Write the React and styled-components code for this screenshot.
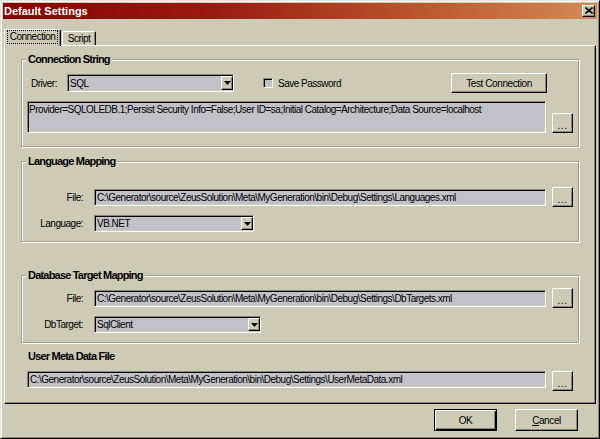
import React from 'react';
import styled, { createGlobalStyle } from 'styled-components';

const FACE = '#cdcab5';
const SHADOW = '#8a8774';
const FIELD = '#c2c1c8';
const FONT = `"Liberation Sans", Arial, sans-serif`;

const Global = createGlobalStyle`
  html, body { margin: 0; padding: 0; background: ${FACE}; }
  body { font-family: ${FONT}; font-size: 10px; letter-spacing: -0.5px; color: #000; }
  * { box-sizing: border-box; }
`;

const Window = styled.div`
  width: 600px;
  height: 439px;
  background: ${FACE};
  border: 1px solid;
  border-color: #e6e4d6 #000 #000 #e6e4d6;
  box-shadow: inset 1px 1px 0 #fff, inset -1px -1px 0 ${SHADOW};
  padding: 2px;
  display: flex;
  flex-direction: column;
`;

const TitleBar = styled.div`
  height: 16px;
  background: linear-gradient(to right, #850202 0%, #9a1a10 35%, #b9562f 70%, #d38b56 100%);
  display: flex;
  align-items: center;
  justify-content: space-between;
  padding: 0 2px 0 1px;
`;

const TitleText = styled.span`
  font-weight: bold;
  font-size: 11px;
  letter-spacing: 0;
  color: #fff;
`;

const CloseBtn = styled.div`
  width: 13px;
  height: 12px;
  background: ${FACE};
  border: 1px solid;
  border-color: #fff #000 #000 #fff;
  box-shadow: inset -1px -1px 0 ${SHADOW};
  display: flex;
  align-items: center;
  justify-content: center;
  margin-top: -1px;
`;

const TabStrip = styled.div`
  display: flex;
  align-items: flex-end;
  height: 16px;
  margin-top: 10px;
  padding-left: 1px;
  position: relative;
  z-index: 1;
`;

const Tab = styled.div`
  width: ${p => p.w}px;
  height: ${p => (p.active ? 17 : 14)}px;
  margin-bottom: ${p => (p.active ? -1 : 0)}px;
  margin-left: ${p => p.ml || 0}px;
  background: ${FACE};
  border: 1px solid;
  border-bottom: none;
  border-color: #fff #000 transparent #fff;
  border-radius: 2px 2px 0 0;
  box-shadow: inset -1px 0 0 ${SHADOW};
  display: flex;
  align-items: center;
  justify-content: center;
  padding-bottom: ${p => (p.active ? 2 : 0)}px;
`;

const Focus = styled.span`
  outline: 1px dotted #000;
  outline-offset: 0;
  padding: 0 2px;
  line-height: 12px;
`;

const Panel = styled.div`
  height: 359px;
  margin: 0 1px;
  border: 1px solid;
  border-color: #fff #000 #000 #fff;
  box-shadow: inset -1px -1px 0 ${SHADOW};
  display: flex;
  flex-direction: column;
`;

const Group = styled.div`
  position: relative;
  width: 558px;
  height: ${p => p.h}px;
  margin: ${p => p.mt}px 0 0 16px;
  border: 1px solid #a29f8b;
  box-shadow: inset 1px 1px 0 #fff, 1px 1px 0 #fff;
  padding-top: ${p => p.pt}px;
  display: flex;
  flex-direction: column;
  gap: 8px;
`;

const Legend = styled.span`
  position: absolute;
  top: -7px;
  left: 4px;
  padding: 0 2px;
  background: ${FACE};
  font-weight: bold;
  font-size: 11px;
  letter-spacing: -0.8px;
  line-height: 13px;
`;

const Heading = styled.div`
  font-weight: bold;
  font-size: 11px;
  letter-spacing: -0.8px;
  line-height: 13px;
  margin: ${p => p.mt}px 0 0 23px;
`;

const Row = styled.div`
  display: flex;
  align-items: ${p => p.align || 'center'};
  height: ${p => p.h}px;
  margin-left: ${p => p.ml || 0}px;
  margin-top: ${p => p.mt || 0}px;
`;

const Label = styled.span`
  width: ${p => p.w}px;
  margin-left: ${p => p.ml || 0}px;
  margin-right: ${p => p.mr || 0}px;
  text-align: ${p => p.align || 'left'};
  white-space: nowrap;
`;

const Field = styled.div`
  width: ${p => p.w}px;
  height: ${p => p.h}px;
  background: ${FIELD};
  border: 1px solid;
  border-color: ${SHADOW} #fff #fff ${SHADOW};
  box-shadow: inset 1px 1px 0 #000, inset -1px -1px 0 ${FACE};
  padding: ${p => p.pad || '1px 2px'};
  line-height: 13px;
  white-space: nowrap;
  overflow: hidden;
  display: flex;
  align-items: ${p => (p.multi ? 'flex-start' : 'center')};
`;

const FieldText = styled.span`
  flex: 1;
  overflow: hidden;
`;

const DropArrow = styled.span`
  width: 12px;
  align-self: stretch;
  margin: 0 -1px 0 0;
  background: ${FACE};
  border: 1px solid;
  border-color: #fff #000 #000 #fff;
  box-shadow: inset -1px -1px 0 ${SHADOW};
  display: flex;
  align-items: center;
  justify-content: center;
`;

const Check = styled.span`
  width: 10px;
  height: 10px;
  margin-left: ${p => p.ml}px;
  margin-right: 5px;
  background: ${FIELD};
  border: 1px solid;
  border-color: ${SHADOW} #fff #fff ${SHADOW};
  box-shadow: inset 1px 1px 0 #000;
`;

const Button = styled.button`
  width: ${p => p.w}px;
  height: ${p => p.h}px;
  margin-left: ${p => p.ml || 0}px;
  margin-right: ${p => p.mr || 0}px;
  background: ${FACE};
  font-family: ${FONT};
  font-size: 10px;
  letter-spacing: -0.4px;
  color: #000;
  padding: 0;
  border: 1px solid;
  border-color: ${p => (p.isDefault ? '#000' : '#fff #000 #000 #fff')};
  box-shadow: ${p =>
    p.isDefault
      ? `inset 1px 1px 0 #fff, inset -1px -1px 0 #000, inset -2px -2px 0 ${SHADOW}`
      : `inset -1px -1px 0 ${SHADOW}`};
  display: flex;
  align-items: center;
  justify-content: center;
  line-height: 13px;
`;

const PushRight = styled.span`
  margin-left: auto;
  display: flex;
`;

const Dots = styled.span`
  padding-top: 5px;
  letter-spacing: 0.5px;
`;

const Footer = styled.div`
  display: flex;
  justify-content: flex-end;
  gap: 18px;
  margin: 5px 19px 0 0;
`;

const Arrow = () => (
  <svg width="7" height="4" viewBox="0 0 7 4">
    <path d="M0 0h7L3.5 4z" fill="#000" />
  </svg>
);

const Select = ({ w, h = 17, value }) => (
  <Field w={w} h={h} pad="1px 1px 1px 2px">
    <FieldText>{value}</FieldText>
    <DropArrow>
      <Arrow />
    </DropArrow>
  </Field>
);

const Ellipsis = () => (
  <Button w={21} h={20} ml={6}>
    <Dots>...</Dots>
  </Button>
);

const base = 'C:\\Generator\\source\\ZeusSolution\\Meta\\MyGeneration\\bin\\Debug\\Settings\\';

export default function App() {
  return (
    <>
      <Global />
      <Window>
        <TitleBar>
          <TitleText>Default Settings</TitleText>
          <CloseBtn>
            <svg width="8" height="7" viewBox="0 0 8 7">
              <path d="M0.5 0.5L7.5 6.5M7.5 0.5L0.5 6.5" stroke="#000" strokeWidth="1.6" />
            </svg>
          </CloseBtn>
        </TitleBar>

        <TabStrip>
          <Tab active w={57}>
            <Focus>Connection</Focus>
          </Tab>
          <Tab w={34} ml={1}>Script</Tab>
        </TabStrip>

        <Panel>
          <Group h={88} mt={13} pt={13}>
            <Legend>Connection String</Legend>
            <Row h={20}>
              <Label w={36} ml={9}>Driver:</Label>
              <Select w={167} h={18} value="SQL" />
              <Check ml={29} />
              <span>Save Password</span>
              <PushRight>
                <Button w={96} h={20} mr={31}>Test Connection</Button>
              </PushRight>
            </Row>
            <Row h={32} ml={5} align="flex-end">
              <Field w={519} h={32} multi pad="1px 1px">
                Provider=SQLOLEDB.1;Persist Security Info=False;User ID=sa;Initial Catalog=Architecture;Data Source=localhost
              </Field>
              <Ellipsis />
            </Row>
          </Group>

          <Group h={81} mt={14} pt={25}>
            <Legend>Language Mapping</Legend>
            <Row h={20}>
              <Label w={61} mr={11} align="right">File:</Label>
              <Field w={452} h={17}>{base + 'Languages.xml'}</Field>
              <Ellipsis />
            </Row>
            <Row h={17}>
              <Label w={61} mr={11} align="right">Language:</Label>
              <Select w={160} value="VB.NET" />
            </Row>
          </Group>

          <Group h={68} mt={33} pt={12}>
            <Legend>Database Target Mapping</Legend>
            <Row h={20}>
              <Label w={61} mr={11} align="right">File:</Label>
              <Field w={452} h={17}>{base + 'DbTargets.xml'}</Field>
              <Ellipsis />
            </Row>
            <Row h={17}>
              <Label w={61} mr={11} align="right">DbTarget:</Label>
              <Select w={167} value="SqlClient" />
            </Row>
          </Group>

          <Heading mt={7}>User Meta Data File</Heading>
          <Row h={20} ml={22} mt={8} align="flex-start">
            <Field w={519} h={17}>{base + 'UserMetaData.xml'}</Field>
            <Ellipsis />
          </Row>
        </Panel>

        <Footer>
          <Button w={63} h={22} isDefault>OK</Button>
          <Button w={63} h={22}>
            <span><u>C</u>ancel</span>
          </Button>
        </Footer>
      </Window>
    </>
  );
}
